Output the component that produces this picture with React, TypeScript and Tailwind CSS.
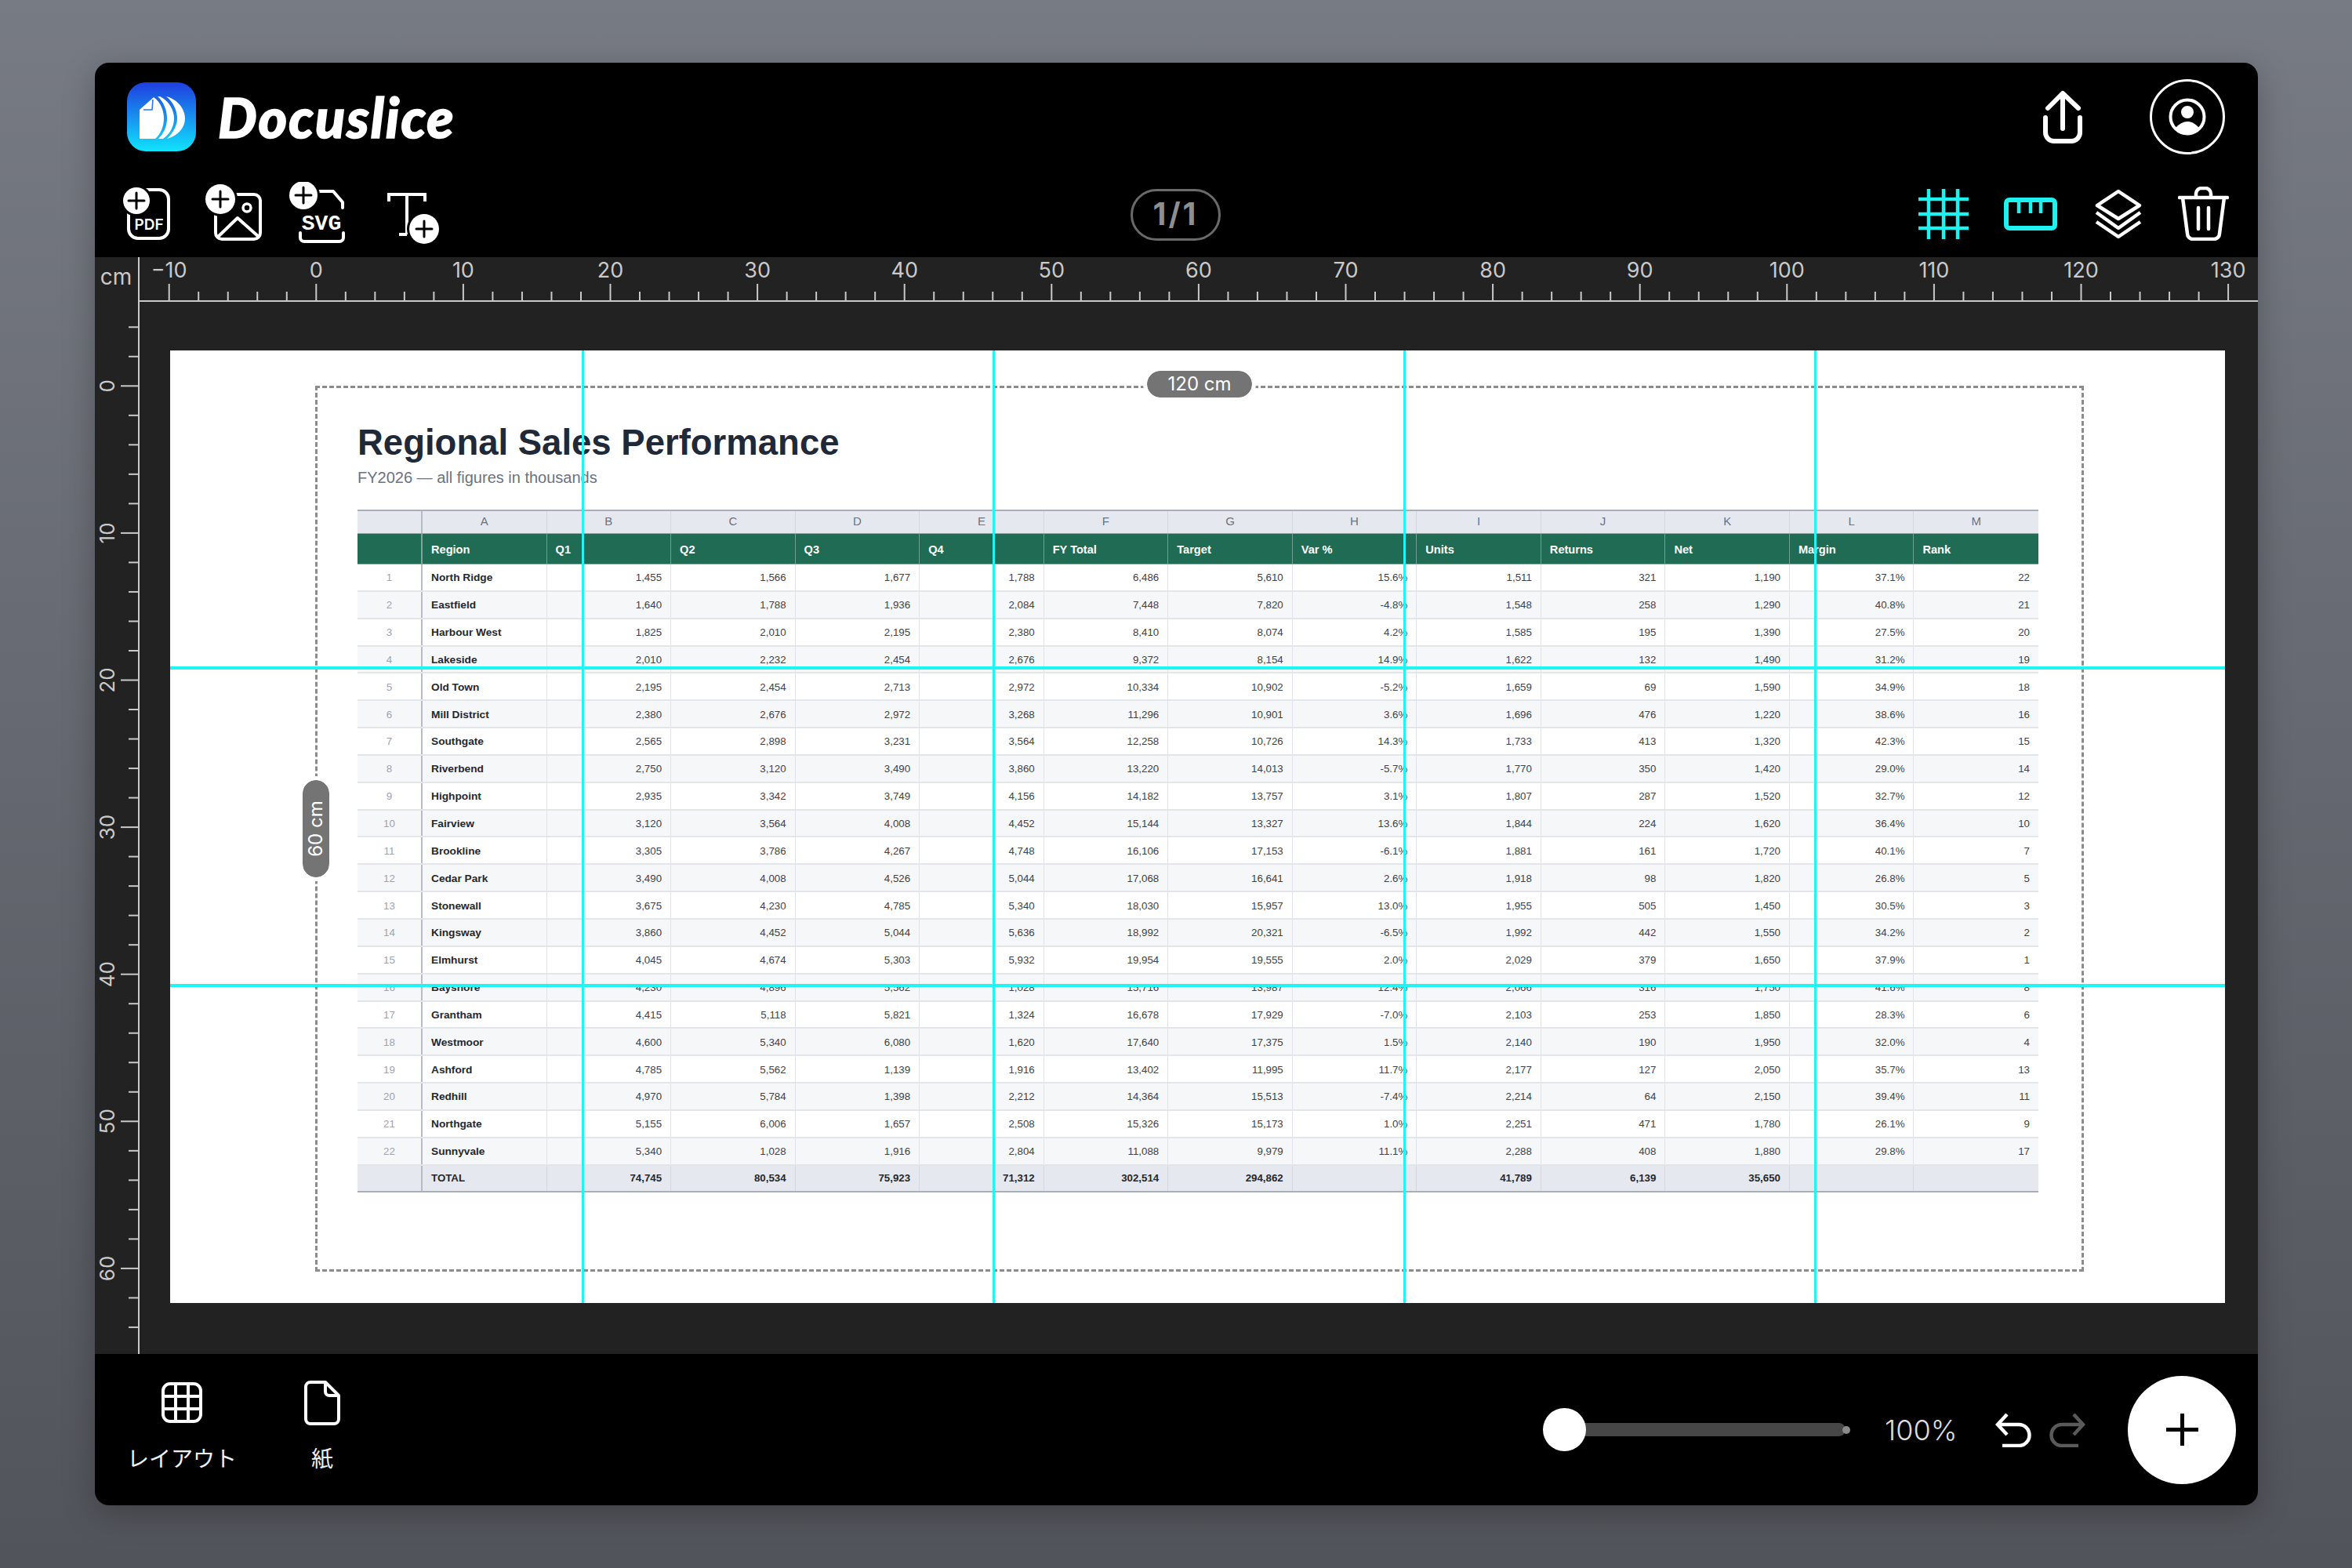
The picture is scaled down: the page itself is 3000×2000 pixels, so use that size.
const columns = ['A', 'B', 'C', 'D', 'E', 'F', 'G', 'H', 'I', 'J', 'K', 'L', 'M'];
const headers = ['Region', 'Q1', 'Q2', 'Q3', 'Q4', 'FY Total', 'Target', 'Var %', 'Units', 'Returns', 'Net', 'Margin', 'Rank'];

const rows: string[][] = [
  ['North Ridge', '1,455', '1,566', '1,677', '1,788', '6,486', '5,610', '15.6%', '1,511', '321', '1,190', '37.1%', '22'],
  ['Eastfield', '1,640', '1,788', '1,936', '2,084', '7,448', '7,820', '-4.8%', '1,548', '258', '1,290', '40.8%', '21'],
  ['Harbour West', '1,825', '2,010', '2,195', '2,380', '8,410', '8,074', '4.2%', '1,585', '195', '1,390', '27.5%', '20'],
  ['Lakeside', '2,010', '2,232', '2,454', '2,676', '9,372', '8,154', '14.9%', '1,622', '132', '1,490', '31.2%', '19'],
  ['Old Town', '2,195', '2,454', '2,713', '2,972', '10,334', '10,902', '-5.2%', '1,659', '69', '1,590', '34.9%', '18'],
  ['Mill District', '2,380', '2,676', '2,972', '3,268', '11,296', '10,901', '3.6%', '1,696', '476', '1,220', '38.6%', '16'],
  ['Southgate', '2,565', '2,898', '3,231', '3,564', '12,258', '10,726', '14.3%', '1,733', '413', '1,320', '42.3%', '15'],
  ['Riverbend', '2,750', '3,120', '3,490', '3,860', '13,220', '14,013', '-5.7%', '1,770', '350', '1,420', '29.0%', '14'],
  ['Highpoint', '2,935', '3,342', '3,749', '4,156', '14,182', '13,757', '3.1%', '1,807', '287', '1,520', '32.7%', '12'],
  ['Fairview', '3,120', '3,564', '4,008', '4,452', '15,144', '13,327', '13.6%', '1,844', '224', '1,620', '36.4%', '10'],
  ['Brookline', '3,305', '3,786', '4,267', '4,748', '16,106', '17,153', '-6.1%', '1,881', '161', '1,720', '40.1%', '7'],
  ['Cedar Park', '3,490', '4,008', '4,526', '5,044', '17,068', '16,641', '2.6%', '1,918', '98', '1,820', '26.8%', '5'],
  ['Stonewall', '3,675', '4,230', '4,785', '5,340', '18,030', '15,957', '13.0%', '1,955', '505', '1,450', '30.5%', '3'],
  ['Kingsway', '3,860', '4,452', '5,044', '5,636', '18,992', '20,321', '-6.5%', '1,992', '442', '1,550', '34.2%', '2'],
  ['Elmhurst', '4,045', '4,674', '5,303', '5,932', '19,954', '19,555', '2.0%', '2,029', '379', '1,650', '37.9%', '1'],
  ['Bayshore', '4,230', '4,896', '5,562', '1,028', '15,716', '13,987', '12.4%', '2,066', '316', '1,750', '41.6%', '8'],
  ['Grantham', '4,415', '5,118', '5,821', '1,324', '16,678', '17,929', '-7.0%', '2,103', '253', '1,850', '28.3%', '6'],
  ['Westmoor', '4,600', '5,340', '6,080', '1,620', '17,640', '17,375', '1.5%', '2,140', '190', '1,950', '32.0%', '4'],
  ['Ashford', '4,785', '5,562', '1,139', '1,916', '13,402', '11,995', '11.7%', '2,177', '127', '2,050', '35.7%', '13'],
  ['Redhill', '4,970', '5,784', '1,398', '2,212', '14,364', '15,513', '-7.4%', '2,214', '64', '2,150', '39.4%', '11'],
  ['Northgate', '5,155', '6,006', '1,657', '2,508', '15,326', '15,173', '1.0%', '2,251', '471', '1,780', '26.1%', '9'],
  ['Sunnyvale', '5,340', '1,028', '1,916', '2,804', '11,088', '9,979', '11.1%', '2,288', '408', '1,880', '29.8%', '17'],
];
const totals = ['TOTAL', '74,745', '80,534', '75,923', '71,312', '302,514', '294,862', '', '41,789', '6,139', '35,650', '', ''];

const CM = 18.76;
const range = (from: number, to: number, step: number) => {
  const out: number[] = [];
  for (let v = from; v <= to; v += step) out.push(v);
  return out;
};

function TopRuler() {
  return (
    <svg width="2759" height="57" className="block shrink-0 bg-[#222222]">
      <text x="27" y="27" textAnchor="middle" dominantBaseline="middle" fontSize="28" fill="#c9c9c9">cm</text>
      {range(-10, 130, 2).map((cm) => {
        const x = 282.3 + cm * CM;
        const major = cm % 10 === 0;
        return (
          <g key={cm}>
            <line x1={x} x2={x} y1={major ? 34 : 44} y2="56" stroke="#c9c9c9" strokeWidth="2" />
            {major && (
              <text x={x} y="19" textAnchor="middle" dominantBaseline="middle" fontSize="27" fill="#c9c9c9">
                {cm < 0 ? `−${-cm}` : cm}
              </text>
            )}
          </g>
        );
      })}
      <line x1="56" x2="2759" y1="56" y2="56" stroke="#c9c9c9" strokeWidth="2" />
      <line x1="56" x2="56" y1="0" y2="57" stroke="#c9c9c9" strokeWidth="2" />
    </svg>
  );
}

function LeftRuler() {
  return (
    <svg width="57" height="1342" className="block shrink-0 overflow-visible bg-[#222222]">
      {range(-4, 64, 2).map((cm) => {
        const y = 107.3 + cm * CM;
        const major = cm % 10 === 0;
        return (
          <g key={cm}>
            <line x1={major ? 33 : 43} x2="56" y1={y} y2={y} stroke="#c9c9c9" strokeWidth="2" />
            {major && (
              <text
                x="18"
                y={y}
                textAnchor="middle"
                dominantBaseline="middle"
                fontSize="26"
                fill="#c9c9c9"
                transform={`rotate(-90 18 ${y})`}
              >
                {cm}
              </text>
            )}
          </g>
        );
      })}
      <line x1="56" x2="56" y1="0" y2="1342" stroke="#c9c9c9" strokeWidth="2" />
    </svg>
  );
}

function PlusBadge({ cx, cy, r }: { cx: number; cy: number; r: number }) {
  return (
    <g>
      <circle cx={cx} cy={cy} r={r + 3} fill="#000" />
      <circle cx={cx} cy={cy} r={r} fill="#fff" />
      <path d={`M${cx - 10} ${cy}H${cx + 10}M${cx} ${cy - 10}V${cy + 10}`} stroke="#000" strokeWidth="3" strokeLinecap="round" />
    </g>
  );
}

function Logo() {
  return (
    <svg width="88" height="88" viewBox="0 0 88 88" className="shrink-0">
      <defs>
        <linearGradient id="logoFill" x1="0" y1="0" x2="0" y2="1">
          <stop offset="0" stopColor="#1f3de0" />
          <stop offset="1" stopColor="#10e4fc" />
        </linearGradient>
      </defs>
      <rect width="88" height="88" rx="24" fill="url(#logoFill)" />
      <path d="M16 35L34 19C44 26 47 38 47 46C47 56 43 66 36 72H16Z" fill="#fff" />
      <path d="M39 18H42C54 24 60 36 60 46C60 56 55 66 46 72H40C47 65 51 56 51 46C51 36 47 25 39 18Z" fill="#fff" />
      <path d="M50 18C65 22 74 34 74 46C74 58 65 68 51 72C58 65 64 56 64 46C64 36 59 25 50 18Z" fill="#fff" />
      <path d="M21 35H32L33 22" fill="none" stroke="#2b78ea" strokeWidth="1.6" />
    </svg>
  );
}

function PdfIcon() {
  return (
    <svg width="60" height="68" viewBox="0 0 60 68" className="mt-[20px] shrink-0">
      <rect x="7" y="4" width="51" height="62" rx="12" fill="none" stroke="#fff" strokeWidth="4" />
      <PlusBadge cx={17} cy={18} r={17} />
      <text x="33" y="55" textAnchor="middle" fontSize="19" fontWeight="600" fill="#fff">PDF</text>
    </svg>
  );
}

function ImageIcon() {
  return (
    <svg width="72" height="72" viewBox="0 0 72 72" className="ml-[45px] mt-[17px] shrink-0">
      <rect x="13" y="13" width="57" height="57" rx="8" fill="none" stroke="#fff" strokeWidth="4" />
      <circle cx="53" cy="30" r="5" fill="none" stroke="#fff" strokeWidth="3.5" />
      <path d="M16 67L41 43L68 67" fill="none" stroke="#fff" strokeWidth="4" strokeLinejoin="round" />
      <PlusBadge cx={19} cy={19} r={19} />
    </svg>
  );
}

function SvgIcon() {
  return (
    <svg width="72" height="78" viewBox="0 0 72 78" className="ml-[34px] mt-[14px] shrink-0">
      <path d="M36 12H57L69 26V33" fill="none" stroke="#fff" strokeWidth="4" strokeLinecap="round" strokeLinejoin="round" />
      <path d="M15 65V71A5 5 0 0 0 20 76H65A5 5 0 0 0 70 71V65" fill="none" stroke="#fff" strokeWidth="4" strokeLinecap="round" />
      <PlusBadge cx={19} cy={17} r={18} />
      <text x="42" y="61" textAnchor="middle" fontSize="28" fontWeight="700" fill="#fff" className="font-['Liberation_Mono',monospace]">SVG</text>
    </svg>
  );
}

function TextIcon() {
  return (
    <svg width="66" height="67" viewBox="0 0 66 67" className="ml-[54px] mt-[27px] shrink-0">
      <path d="M2 12V3H48V12M25 3V54M15 54H25" fill="none" stroke="#fff" strokeWidth="4" />
      <PlusBadge cx={47} cy={47} r={19} />
    </svg>
  );
}

function ShareIcon() {
  return (
    <svg width="56" height="69" viewBox="0 0 56 69" className="shrink-0">
      <path d="M28 49V5M9 23L28 4L48 23" fill="none" stroke="#fff" strokeWidth="6" strokeLinecap="round" strokeLinejoin="round" />
      <path d="M6 35V54A11 11 0 0 0 17 65H39A11 11 0 0 0 50 54V35" fill="none" stroke="#fff" strokeWidth="6" strokeLinecap="round" />
    </svg>
  );
}

function UserIcon() {
  return (
    <svg width="48" height="48" viewBox="0 0 48 48">
      <circle cx="24" cy="24" r="21.5" fill="none" stroke="#fff" strokeWidth="4" />
      <circle cx="24" cy="18" r="8" fill="#fff" />
      <path d="M9 38Q24 22 39 38A20 20 0 0 1 9 38Z" fill="#fff" />
    </svg>
  );
}

function GridIcon() {
  return (
    <svg width="66" height="66" viewBox="0 0 66 66" className="shrink-0">
      <path d="M14 1V65M33 1V65M51 1V65M1 14H65M1 33H65M1 51H65" stroke="#1df2f0" strokeWidth="4.5" />
    </svg>
  );
}

function RulerIcon() {
  return (
    <svg width="68" height="42" viewBox="0 0 68 42" className="ml-[44px] shrink-0">
      <rect x="3" y="3" width="62" height="36" rx="4" fill="none" stroke="#1df2f0" strokeWidth="6" />
      <path d="M19 3V20M34 3V20M47 3V20" stroke="#1df2f0" strokeWidth="4.5" />
    </svg>
  );
}

function LayersIcon() {
  return (
    <svg width="60" height="64" viewBox="0 0 60 64" className="ml-[48px] shrink-0">
      <path d="M30 3L57 21L30 38L3 21Z" fill="none" stroke="#fff" strokeWidth="4.5" strokeLinejoin="round" />
      <path d="M2 30L30 50L58 30" fill="none" stroke="#fff" strokeWidth="4.5" strokeLinejoin="round" />
      <path d="M2 42L30 61L58 42" fill="none" stroke="#fff" strokeWidth="4.5" strokeLinejoin="round" />
    </svg>
  );
}

function TrashIcon() {
  return (
    <svg width="65" height="69" viewBox="0 0 65 69" className="ml-[46px] shrink-0">
      <path d="M2 14H63" stroke="#fff" strokeWidth="4.5" strokeLinecap="round" />
      <path d="M23 13V9A7 7 0 0 1 30 2H35A7 7 0 0 1 42 9V13" fill="none" stroke="#fff" strokeWidth="4.5" />
      <path d="M6 14L12 60A7 7 0 0 0 19 67H46A7 7 0 0 0 53 60L59 14" fill="none" stroke="#fff" strokeWidth="4.5" />
      <path d="M26 27V54M39 27V54" stroke="#fff" strokeWidth="4.5" strokeLinecap="round" />
    </svg>
  );
}

function TableIcon() {
  return (
    <svg width="52" height="52" viewBox="0 0 52 52">
      <rect x="2" y="2" width="48" height="48" rx="9" fill="none" stroke="#fff" strokeWidth="4" />
      <path d="M18 2V50M34 2V50M2 18H50M2 34H50" stroke="#fff" strokeWidth="4" />
    </svg>
  );
}

function DocIcon() {
  return (
    <svg width="46" height="57" viewBox="0 0 46 57">
      <path d="M8 2H27L44 19V49A6 6 0 0 1 38 55H8A6 6 0 0 1 2 49V8A6 6 0 0 1 8 2Z" fill="none" stroke="#fff" strokeWidth="4" strokeLinejoin="round" />
      <path d="M27 2V14A5 5 0 0 0 32 19H44" fill="none" stroke="#fff" strokeWidth="4" />
    </svg>
  );
}

function UndoIcon({ color, flip }: { color: string; flip?: boolean }) {
  return (
    <svg width="46" height="44" viewBox="0 0 46 44" className={flip ? 'shrink-0 -scale-x-100' : 'shrink-0'}>
      <path d="M15 2L3 15L15 28M3 15H30A13.5 13.5 0 0 1 30 42H9" fill="none" stroke={color} strokeWidth="4.5" />
    </svg>
  );
}

function SheetTable() {
  const grid = 'grid grid-cols-[83px_repeat(13,minmax(0,1fr))]';
  return (
    <div className="mt-[28px] w-[2144px] font-['Liberation_Sans',Arial,sans-serif] text-[13.3px] leading-[16px]">
      <div className={`${grid} h-[30px] border-t-2 border-[#a9aebb] bg-[#e5e8ef] text-[15px] text-[#6b7280]`}>
        <div className="border-r-2 border-[#b7bcc8]" />
        {columns.map((c) => (
          <div key={c} className="flex items-center justify-center border-r border-[#d3d7e0] pb-[2px] last:border-r-0">{c}</div>
        ))}
      </div>
      <div className={`${grid} h-[40px] border-y border-[#8fa8a0] bg-[#1f6b54] text-[14.6px] font-bold text-white`}>
        <div className="border-r-2 border-[#7fa598]" />
        {headers.map((h) => (
          <div key={h} className="flex items-center border-r border-[#6f9f90] pl-[11px] pt-[2px] last:border-r-0">{h}</div>
        ))}
      </div>
      {rows.map((row, i) => {
        // row 16 was cut where the horizontal guide slices the page, its glyph tops are gone
        const clip = i === 15 ? '[clip-path:inset(4px_0_0_0)]' : '';
        return (
          <div key={row[0]} className={`${grid} h-[34.85px] border-b-2 border-[#e2e5ea] ${i % 2 ? 'bg-[#f6f7f9]' : 'bg-white'}`}>
            <div className="flex items-center justify-center border-r-2 border-[#b7bcc8] pt-[2px] text-[#9ca3af]">
              <span className={clip}>{i + 1}</span>
            </div>
            {row.map((cell, j) => (
              <div
                key={j}
                className={
                  j === 0
                    ? 'flex items-center border-r border-[#e0e3e9] pl-[11px] pt-[2px] text-[13.7px] font-bold text-[#25282e]'
                    : 'flex items-center justify-end border-r border-[#e0e3e9] pr-[11px] pt-[2px] text-[#404249] last:border-r-0'
                }
              >
                <span className={clip}>{cell}</span>
              </div>
            ))}
          </div>
        );
      })}
      <div className={`${grid} h-[34px] border-b-2 border-[#a9aebb] bg-[#e5e8ef] font-bold text-[#25282e]`}>
        <div className="border-r-2 border-[#b7bcc8]" />
        {totals.map((cell, j) => (
          <div
            key={j}
            className={
              j === 0
                ? 'flex items-center border-r border-[#d3d7e0] pl-[11px] pt-[1px]'
                : 'flex items-center justify-end border-r border-[#d3d7e0] pr-[11px] pt-[1px] last:border-r-0'
            }
          >
            {cell}
          </div>
        ))}
      </div>
    </div>
  );
}

export default function App() {
  return (
    <div className="h-[2000px] w-[3000px] bg-gradient-to-b from-[#777b84] to-[#52545b] pl-[121px] pt-[80px] font-[Inter,sans-serif]">
      <div className="flex h-[1840px] w-[2759px] flex-col overflow-hidden rounded-[18px] bg-black shadow-[0_10px_40px_rgba(0,0,0,0.25)]">
        <header className="flex h-[248px] shrink-0 flex-col pl-[36px] pr-[37px] text-white">
          <div className="flex h-[138px] items-center justify-between pl-[5px] pr-[5px]">
            <div className="flex items-center gap-[28px]">
              <Logo />
              <span className="text-[70px] font-black italic leading-none tracking-[2px] [-webkit-text-stroke:1.5px_white] font-[Lato,sans-serif]">Docuslice</span>
            </div>
            <div className="flex items-center gap-[83px]">
              <ShareIcon />
              <div className="flex h-[96px] w-[96px] items-center justify-center rounded-full border-[3px] border-white">
                <UserIcon />
              </div>
            </div>
          </div>
          <div className="relative flex flex-1 items-start justify-between">
            <div className="flex items-start">
              <PdfIcon />
              <ImageIcon />
              <SvgIcon />
              <TextIcon />
            </div>
            <div className="absolute left-[1285px] top-[23px] flex h-[66px] w-[115px] items-center justify-center rounded-full border-[3px] border-[#6a6a6a] pb-[2px] text-[39px] font-bold tracking-[3px] text-[#8f8f8f]">
              1/1
            </div>
            <div className="flex items-center pt-[20px]">
              <GridIcon />
              <RulerIcon />
              <LayersIcon />
              <TrashIcon />
            </div>
          </div>
        </header>

        <TopRuler />

        <div className="flex h-[1342px] shrink-0 bg-[#222222]">
          <LeftRuler />
          <main className="flex-1 pl-[39px] pr-[42px] pt-[62px]">
            <div className="relative h-[1215px] bg-white pl-[185px] pt-[45px]">
              <div className="h-[1130px] w-[2256px] border-[3px] border-dashed border-[#8c8c8c] pl-[51px] pt-[44px]">
                <h1 className="h-[52px] text-[45.5px] font-bold leading-[52px] text-[#1f2937] font-['Liberation_Sans',Arial,sans-serif]">
                  Regional Sales Performance
                </h1>
                <p className="mt-[5px] h-[26px] text-[20px] leading-[26px] text-[#6b7280] font-['Liberation_Sans',Arial,sans-serif]">
                  FY2026 — all figures in thousands
                </p>
                <SheetTable />
              </div>

              <div className="absolute left-[1246px] top-[26px] flex h-[34px] w-[134px] items-center justify-center rounded-full bg-[#747474] text-[24px] leading-none text-white outline-[5px] outline-white">
                120 cm
              </div>
              <div className="absolute left-[169px] top-[548px] flex h-[124px] w-[34px] items-center justify-center rounded-full bg-[#747474] outline-[5px] outline-white">
                <span className="-rotate-90 whitespace-nowrap text-[24px] leading-none text-white">60 cm</span>
              </div>

              <div className="absolute inset-y-0 left-[525px] w-[3px] bg-[#1ff5f4]" />
              <div className="absolute inset-y-0 left-[1049px] w-[3px] bg-[#1ff5f4]" />
              <div className="absolute inset-y-0 left-[1573px] w-[3px] bg-[#1ff5f4]" />
              <div className="absolute inset-y-0 left-[2097px] w-[3px] bg-[#1ff5f4]" />
              <div className="absolute inset-x-0 top-[403px] h-[4px] bg-[#1ff5f4]" />
              <div className="absolute inset-x-0 top-[808px] h-[4px] bg-[#1ff5f4]" />
            </div>
          </main>
        </div>

        <footer className="flex flex-1 items-center justify-between pl-[38px] pr-[28px] text-white">
          <div className="mb-[8px] flex items-start">
            <button className="flex w-[146px] flex-col items-center">
              <span className="flex h-[57px] items-center"><TableIcon /></span>
              <span className="mt-[21px] text-[28px] leading-[40px] text-[#f0f0f0] font-['Noto_Sans_CJK_JP',sans-serif]">レイアウト</span>
            </button>
            <button className="ml-[56px] flex w-[100px] flex-col items-center">
              <DocIcon />
              <span className="mt-[21px] text-[28px] leading-[40px] text-[#f0f0f0] font-['Noto_Sans_CJK_JP',sans-serif]">紙</span>
            </button>
          </div>
          <div className="flex items-center">
            <div className="relative flex h-[55px] w-[392px] items-center">
              <div className="ml-[20px] h-[17px] w-[366px] rounded-full bg-[#474747]" />
              <div className="absolute right-0 h-[10px] w-[10px] rounded-full bg-[#8a8a8a]" />
              <div className="absolute left-0 h-[55px] w-[55px] rounded-full bg-white" />
            </div>
            <span className="ml-[44px] w-[94px] whitespace-nowrap text-[36px] font-light leading-none text-[#dddddd]">100%</span>
            <div className="ml-[47px] flex items-center gap-[23px]">
              <UndoIcon color="#ffffff" />
              <UndoIcon color="#5a5a5a" flip />
            </div>
            <button className="ml-[54px] flex h-[138px] w-[138px] items-center justify-center rounded-full bg-white">
              <svg width="41" height="41" viewBox="0 0 41 41">
                <path d="M0 20.5H41M20.5 0V41" stroke="#000" strokeWidth="5" />
              </svg>
            </button>
          </div>
        </footer>
      </div>
    </div>
  );
}
